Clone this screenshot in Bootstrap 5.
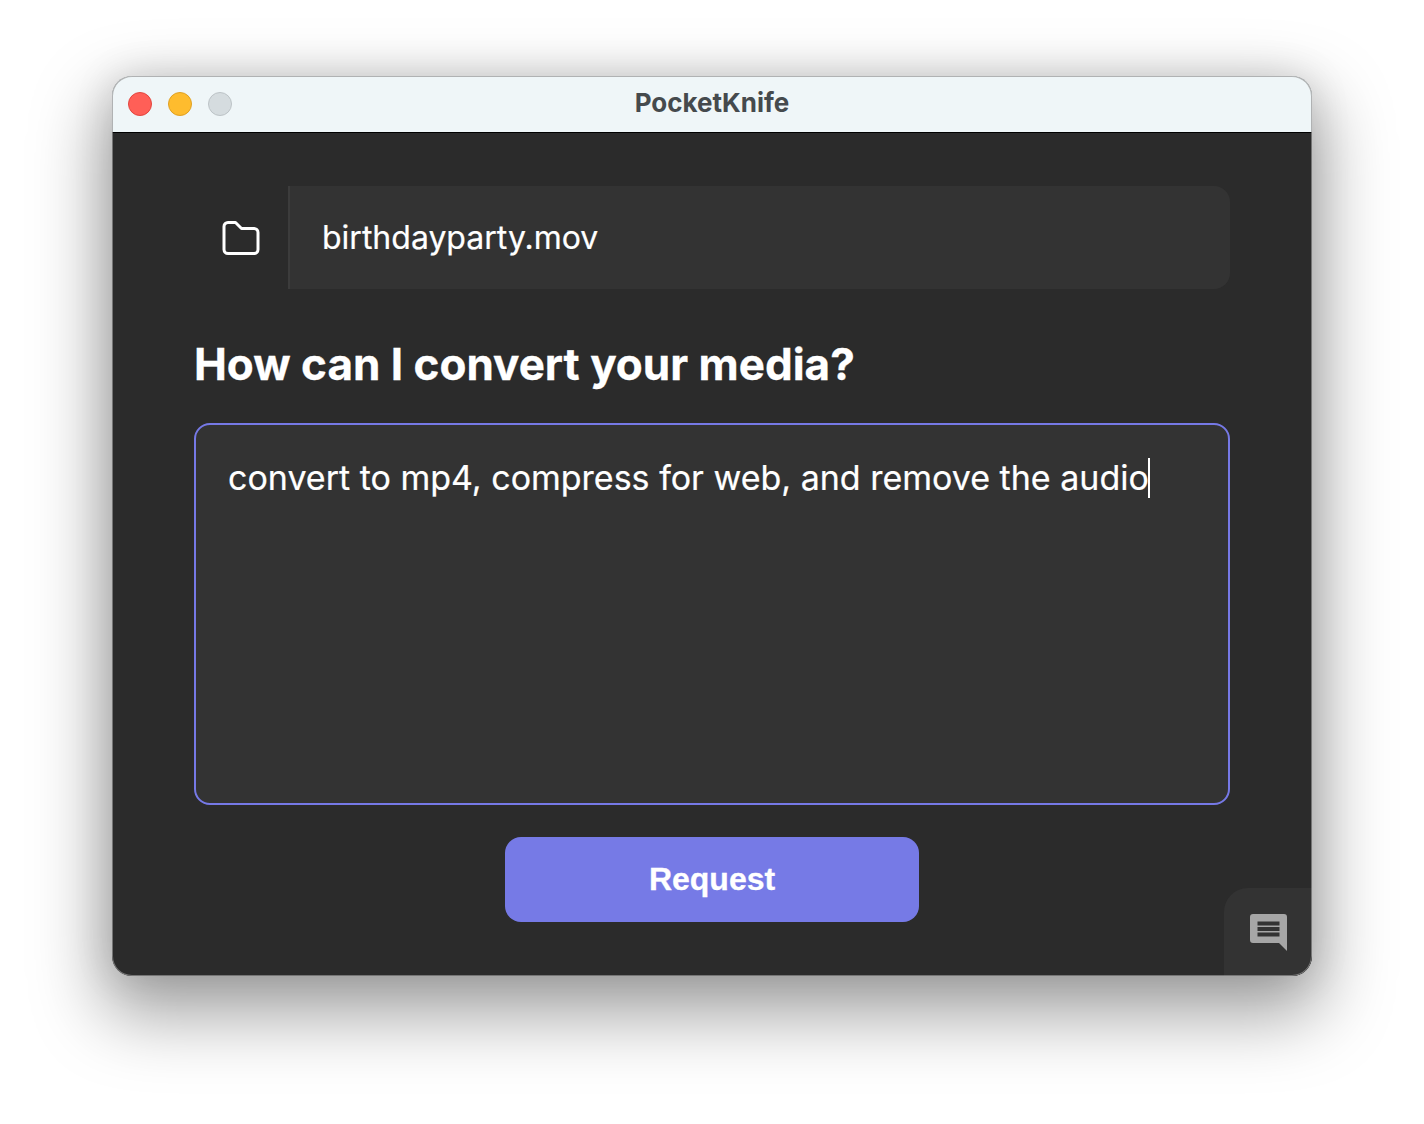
<!DOCTYPE html>
<html lang="en">
<head>
<meta charset="utf-8">
<title>PocketKnife</title>
<link href="https://cdn.jsdelivr.net/npm/bootstrap@5.3.0/dist/css/bootstrap.min.css" rel="stylesheet">
<style>
html,body{height:100%;background:#fff;overflow:hidden}
body{font-family:"Inter","Liberation Sans",sans-serif;padding:76px 112px 0}
.app-window{width:1200px;height:900px;border-radius:20px;overflow:hidden;position:relative;background:#2b2b2b;box-shadow:0 30px 70px 10px rgba(0,0,0,.36),0 0 40px rgba(0,0,0,.12)}
.app-window::after{content:"";position:absolute;inset:0;border-radius:20px;box-shadow:inset 0 0 0 1px rgba(150,150,150,.7);pointer-events:none}
.title-bar{height:57px;background:#eff6f8;border-bottom:1px solid #000;position:relative}
.traffic{width:24px;height:24px;border-radius:50%;border:1px solid}
.t-red{background:#ff5f57;border-color:#e2463f}
.t-yellow{background:#febc2e;border-color:#dfa023}
.t-grey{background:#d5dcdf;border-color:#bcc3c6}
.title-text{font-size:26px;font-weight:700;color:#454a4d;line-height:1;padding-bottom:3px}
.main-pane{padding:53px 82px 0}
.file-row{height:103px}
.folder-cell{width:94px;border-right:2px solid #3c3c3c;box-sizing:content-box}
.file-name{background:#333;border-radius:0 16px 16px 0;color:#fff;font-size:32px;padding-left:32px;-webkit-text-stroke:.2px #fff}
.prompt-title{font-size:44px;font-weight:700;color:#fff;margin:49px 0 32px;line-height:53px;-webkit-text-stroke:.3px #fff}
.prompt-box{height:382px;border:2px solid #7679e6;border-radius:16px;background:#333;color:#fff;font-size:34px;line-height:42px;padding:32px 32px;-webkit-text-stroke:.2px #fff}
.caret-bar{display:inline-block;width:2px;height:40px;background:#fff;vertical-align:-8px;margin-left:-1px}
.req-btn{width:414px;height:85px;background:#767ae6;border:0;border-radius:16px;color:#fff;font-family:"Liberation Sans",Arial,sans-serif;font-weight:700;font-size:32px;margin-top:32px;padding:0 0 2px;-webkit-text-stroke:.3px #fff}
.req-btn:hover,.req-btn:active{background:#767ae6!important;color:#fff!important}
.chat-tab{position:absolute;right:0;bottom:0;width:88px;height:88px;background:#333;border-radius:24px 0 0 0}
</style>
</head>
<body>
<div class="app-window">
  <div class="title-bar d-flex align-items-center justify-content-center">
    <div class="d-flex gap-3 position-absolute start-0 top-50 translate-middle-y ms-3">
      <span class="traffic t-red"></span><span class="traffic t-yellow"></span><span class="traffic t-grey"></span>
    </div>
    <span class="title-text">PocketKnife</span>
  </div>
  <div class="main-pane">
    <div class="file-row d-flex">
      <div class="folder-cell d-flex align-items-center justify-content-center flex-shrink-0">
        <svg width="38" height="34" viewBox="0 0 38 34" fill="none" stroke="#fff" stroke-width="3" stroke-linejoin="round"><path d="M2 5.5a4 4 0 0 1 4-4h7.5l6 6H32a4 4 0 0 1 4 4v17a4 4 0 0 1-4 4H6a4 4 0 0 1-4-4z"/></svg>
      </div>
      <div class="file-name flex-grow-1 d-flex align-items-center">birthdayparty.mov</div>
    </div>
    <h1 class="prompt-title">How can I convert your media?</h1>
    <div class="prompt-box">convert to mp4, compress for web, and remove the audio<span class="caret-bar"></span></div>
    <div class="d-flex justify-content-center">
      <button class="btn req-btn" type="button">Request</button>
    </div>
  </div>
  <div class="chat-tab d-flex align-items-center justify-content-center">
    <svg width="37" height="37" viewBox="0 0 37 37"><path fill="#a6a6a6" fill-rule="evenodd" d="M3 0h31a3 3 0 0 1 3 3v34l-8-8H3a3 3 0 0 1-3-3V3a3 3 0 0 1 3-3zM7.5 7.5v4h22v-4zm0 5.5v4h22v-4zm0 5.5v4h22v-4z"/></svg>
  </div>
</div>
<script src="https://cdn.jsdelivr.net/npm/bootstrap@5.3.0/dist/js/bootstrap.bundle.min.js"></script>
</body>
</html>
